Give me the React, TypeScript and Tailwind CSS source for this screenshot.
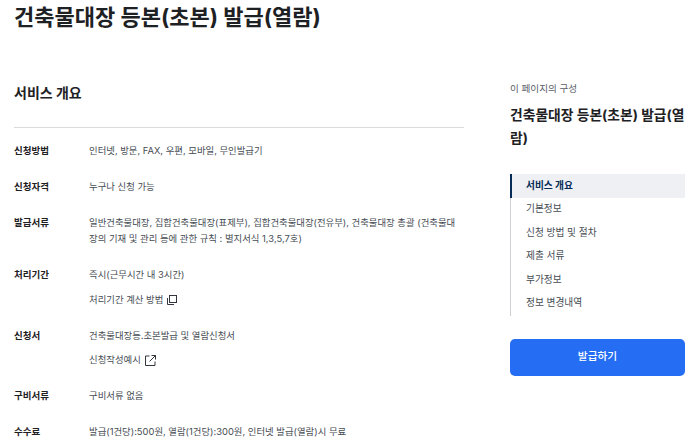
import React from 'react';

const KR = "font-['Inter','Noto_Sans_CJK_KR','Noto_Sans',sans-serif]";

const TOC = ['기본정보', '신청 방법 및 절차', '제출 서류', '부가정보', '정보 변경내역'];

const Row: React.FC<{ label: string; className?: string; children: React.ReactNode }> = ({ label, className, children }) => (
  <div className={`flex ${className ?? ''}`}>
    <div className="w-[75px] shrink-0 text-[9.5px] font-bold text-[#1e2124] leading-[16px]">{label}</div>
    <div className="flex-1 pr-[8px] text-[#464c53] leading-[16px]">{children}</div>
  </div>
);

const App: React.FC = () => {
  return (
    <div className={`${KR} w-[700px] h-[443px] overflow-hidden bg-white pl-[14px] pr-[15px] text-[9.4px]`}>
      <h1 className="h-[33px] pt-[1px] text-[22px] leading-[32px] font-bold text-[#1e2124]">건축물대장 등본(초본) 발급(열람)</h1>

      <div className="flex mt-[36px] justify-between">
        {/* 본문 */}
        <div className="w-[450px]">
          <h2 className="text-[14px] leading-[20px] font-bold text-[#1e2124] mt-[14px]">서비스 개요</h2>
          <div className="border-t border-[#d9dbdd] mt-[24px] pt-[15px]">
            <Row label="신청방법">인터넷, 방문, FAX, 우편, 모바일, 무인발급기</Row>
            <Row label="신청자격" className="mt-[20px]">누구나 신청 가능</Row>
            <Row label="발급서류" className="mt-[20px]">
              일반건축물대장, 집합건축물대장(표제부), 집합건축물대장(전유부), 건축물대장 총괄 (건축물대장의 기재 및 관리 등에 관한 규칙 : 별지서식 1,3,5,7호)
            </Row>
            <Row label="처리기간" className="mt-[20px]">
              <div>즉시(근무시간 내 3시간)</div>
              <div className="mt-[8.5px] flex items-center gap-[4px]">
                처리기간 계산 방법
                <svg width="10" height="10" viewBox="0 0 10 10" fill="none" stroke="#33363d" strokeWidth="1">
                  <rect x="2.5" y="0.5" width="7" height="7" />
                  <path d="M0.5 3v6.5H7" />
                </svg>
              </div>
            </Row>
            <Row label="신청서" className="mt-[20px]">
              <div>건축물대장등.초본발급 및 열람신청서</div>
              <div className="mt-[8.5px] flex items-center gap-[4px]">
                신청작성예시
                <svg width="11" height="11" viewBox="0 0 11 11" fill="none" stroke="#33363d" strokeWidth="1">
                  <path d="M4.5 1H0.5V10.5H10V6.5" />
                  <path d="M6.5 0.5H10.5V4.5" />
                  <path d="M10.5 0.5L4.5 6.5" />
                </svg>
              </div>
            </Row>
            <Row label="구비서류" className="mt-[20px]">구비서류 없음</Row>
            <Row label="수수료" className="mt-[20px]">발급(1건당):500원, 열람(1건당):300원, 인터넷 발급(열람)시 무료</Row>
          </div>
        </div>

        {/* 이 페이지의 구성 */}
        <aside className="w-[175px]">
          <div className="text-[9.6px] leading-[14px] text-[#5a6068] mt-[13px]">이 페이지의 구성</div>
          <div className="text-[13.8px] leading-[23px] font-bold text-[#1e2124] mt-[8px]">건축물대장 등본(초본) 발급(열람)</div>
          <nav className="mt-[24px] border-l border-[#cdd1d5]">
            <div className="-ml-px h-[24px] pl-[14px] flex items-center border-l-2 border-[#052b57] bg-[#eef0f4] font-bold text-[#052b57] text-[9.7px]">서비스 개요</div>
            {TOC.map(item => (
              <div key={item} className="h-[23.5px] pl-[15px] flex items-center text-[#464c53] text-[9.7px]">{item}</div>
            ))}
          </nav>
          <button className="mt-[23px] w-full h-[37px] rounded-[5px] bg-[#256ef4] text-white text-[10.7px] font-medium">발급하기</button>
        </aside>
      </div>
    </div>
  );
};

export default App;
